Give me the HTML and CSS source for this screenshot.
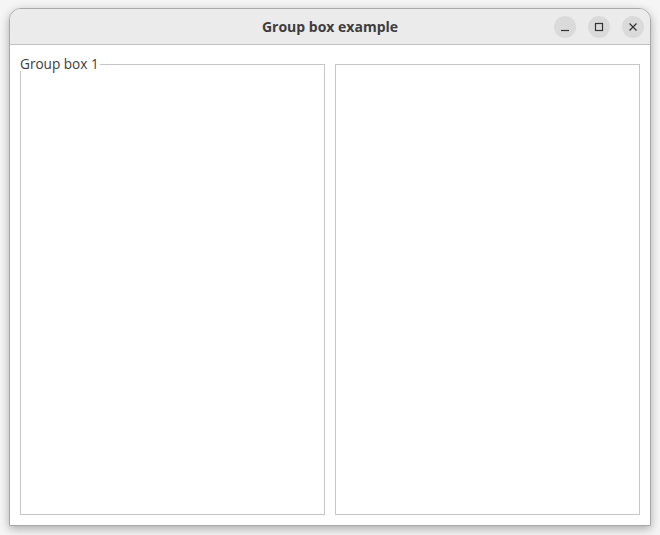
FILE: index.html
```html
<!DOCTYPE html>
<html lang="en">
<head>
    <meta charset="UTF-8">
    <title>Group box example</title>
    <link rel="stylesheet" href="styles.css">
</head>
<body>
    <div class="window">
        <div class="titlebar">
            <div></div>
            <div class="title">Group box example</div>
            <div class="controls">
                <button class="ctl" title="Minimize">
                    <svg width="10" height="10" viewBox="0 0 10 10"><path d="M1 8.5H9" stroke="#333" stroke-width="1.2"/></svg>
                </button>
                <button class="ctl" title="Maximize">
                    <svg width="10" height="10" viewBox="0 0 10 10"><rect x="1.5" y="1.5" width="7" height="7" fill="none" stroke="#333" stroke-width="1.2"/></svg>
                </button>
                <button class="ctl" title="Close">
                    <svg width="10" height="10" viewBox="0 0 10 10"><path d="M1.5 1.5L8.5 8.5M8.5 1.5L1.5 8.5" stroke="#333" stroke-width="1.2"/></svg>
                </button>
            </div>
        </div>

        <div class="panes">
            <div class="group">
                <div class="group-title">Group box 1</div>
                <div class="group-body"></div>
            </div>
            <div class="group plain">
                <div class="group-body"></div>
            </div>
        </div>
    </div>
</body>
</html>
```

FILE: styles.css
```css
body {
    margin: 0;
    height: 535px;
    background: #f5f5f5;
    font-family: "Open Sans", "DejaVu Sans", sans-serif;
    overflow: hidden;
}

.window {
    margin: 8px 0 0 9px;
    width: 640px;
    height: 516px;
    border: 1px solid #a8a8a8;
    border-radius: 12px 12px 0 0;
    background: #fff;
    box-shadow: 0 3px 10px rgba(0, 0, 0, 0.3);
    display: flex;
    flex-direction: column;
}

.titlebar {
    height: 35px;
    border-bottom: 1px solid #c2c2c2;
    background: #ebebeb;
    border-radius: 11px 11px 0 0;
    display: grid;
    grid-template-columns: 1fr auto 1fr;
    align-items: center;
}

.title {
    font-size: 14px;
    font-weight: 700;
    color: #3d3d3d;
}

.controls {
    display: flex;
    justify-content: flex-end;
    gap: 12px;
    padding-right: 6px;
}

.ctl {
    width: 22px;
    height: 22px;
    padding: 0;
    border: none;
    border-radius: 50%;
    background: #dadada;
    display: flex;
    align-items: center;
    justify-content: center;
}

.panes {
    flex: 1;
    display: grid;
    grid-template-columns: 1fr 1fr;
    gap: 10px;
    padding: 12px 10px 10px 10px;
}

.group {
    display: flex;
    flex-direction: column;
}

.group-title {
    display: flex;
    height: 14px;
    line-height: 14px;
    font-size: 13.6px;
    color: #3c3c3c;
    white-space: nowrap;
}

.group-title::after {
    content: "";
    flex: 1;
    align-self: flex-end;
    height: 6px;
    margin-left: 1px;
    border-top: 1px solid #c6c6c6;
    border-right: 1px solid #c6c6c6;
}

.group-body {
    flex: 1;
    border: 1px solid #c6c6c6;
    border-top: none;
}

.group.plain .group-body {
    margin-top: 7px;
    border-top: 1px solid #c6c6c6;
}
```
